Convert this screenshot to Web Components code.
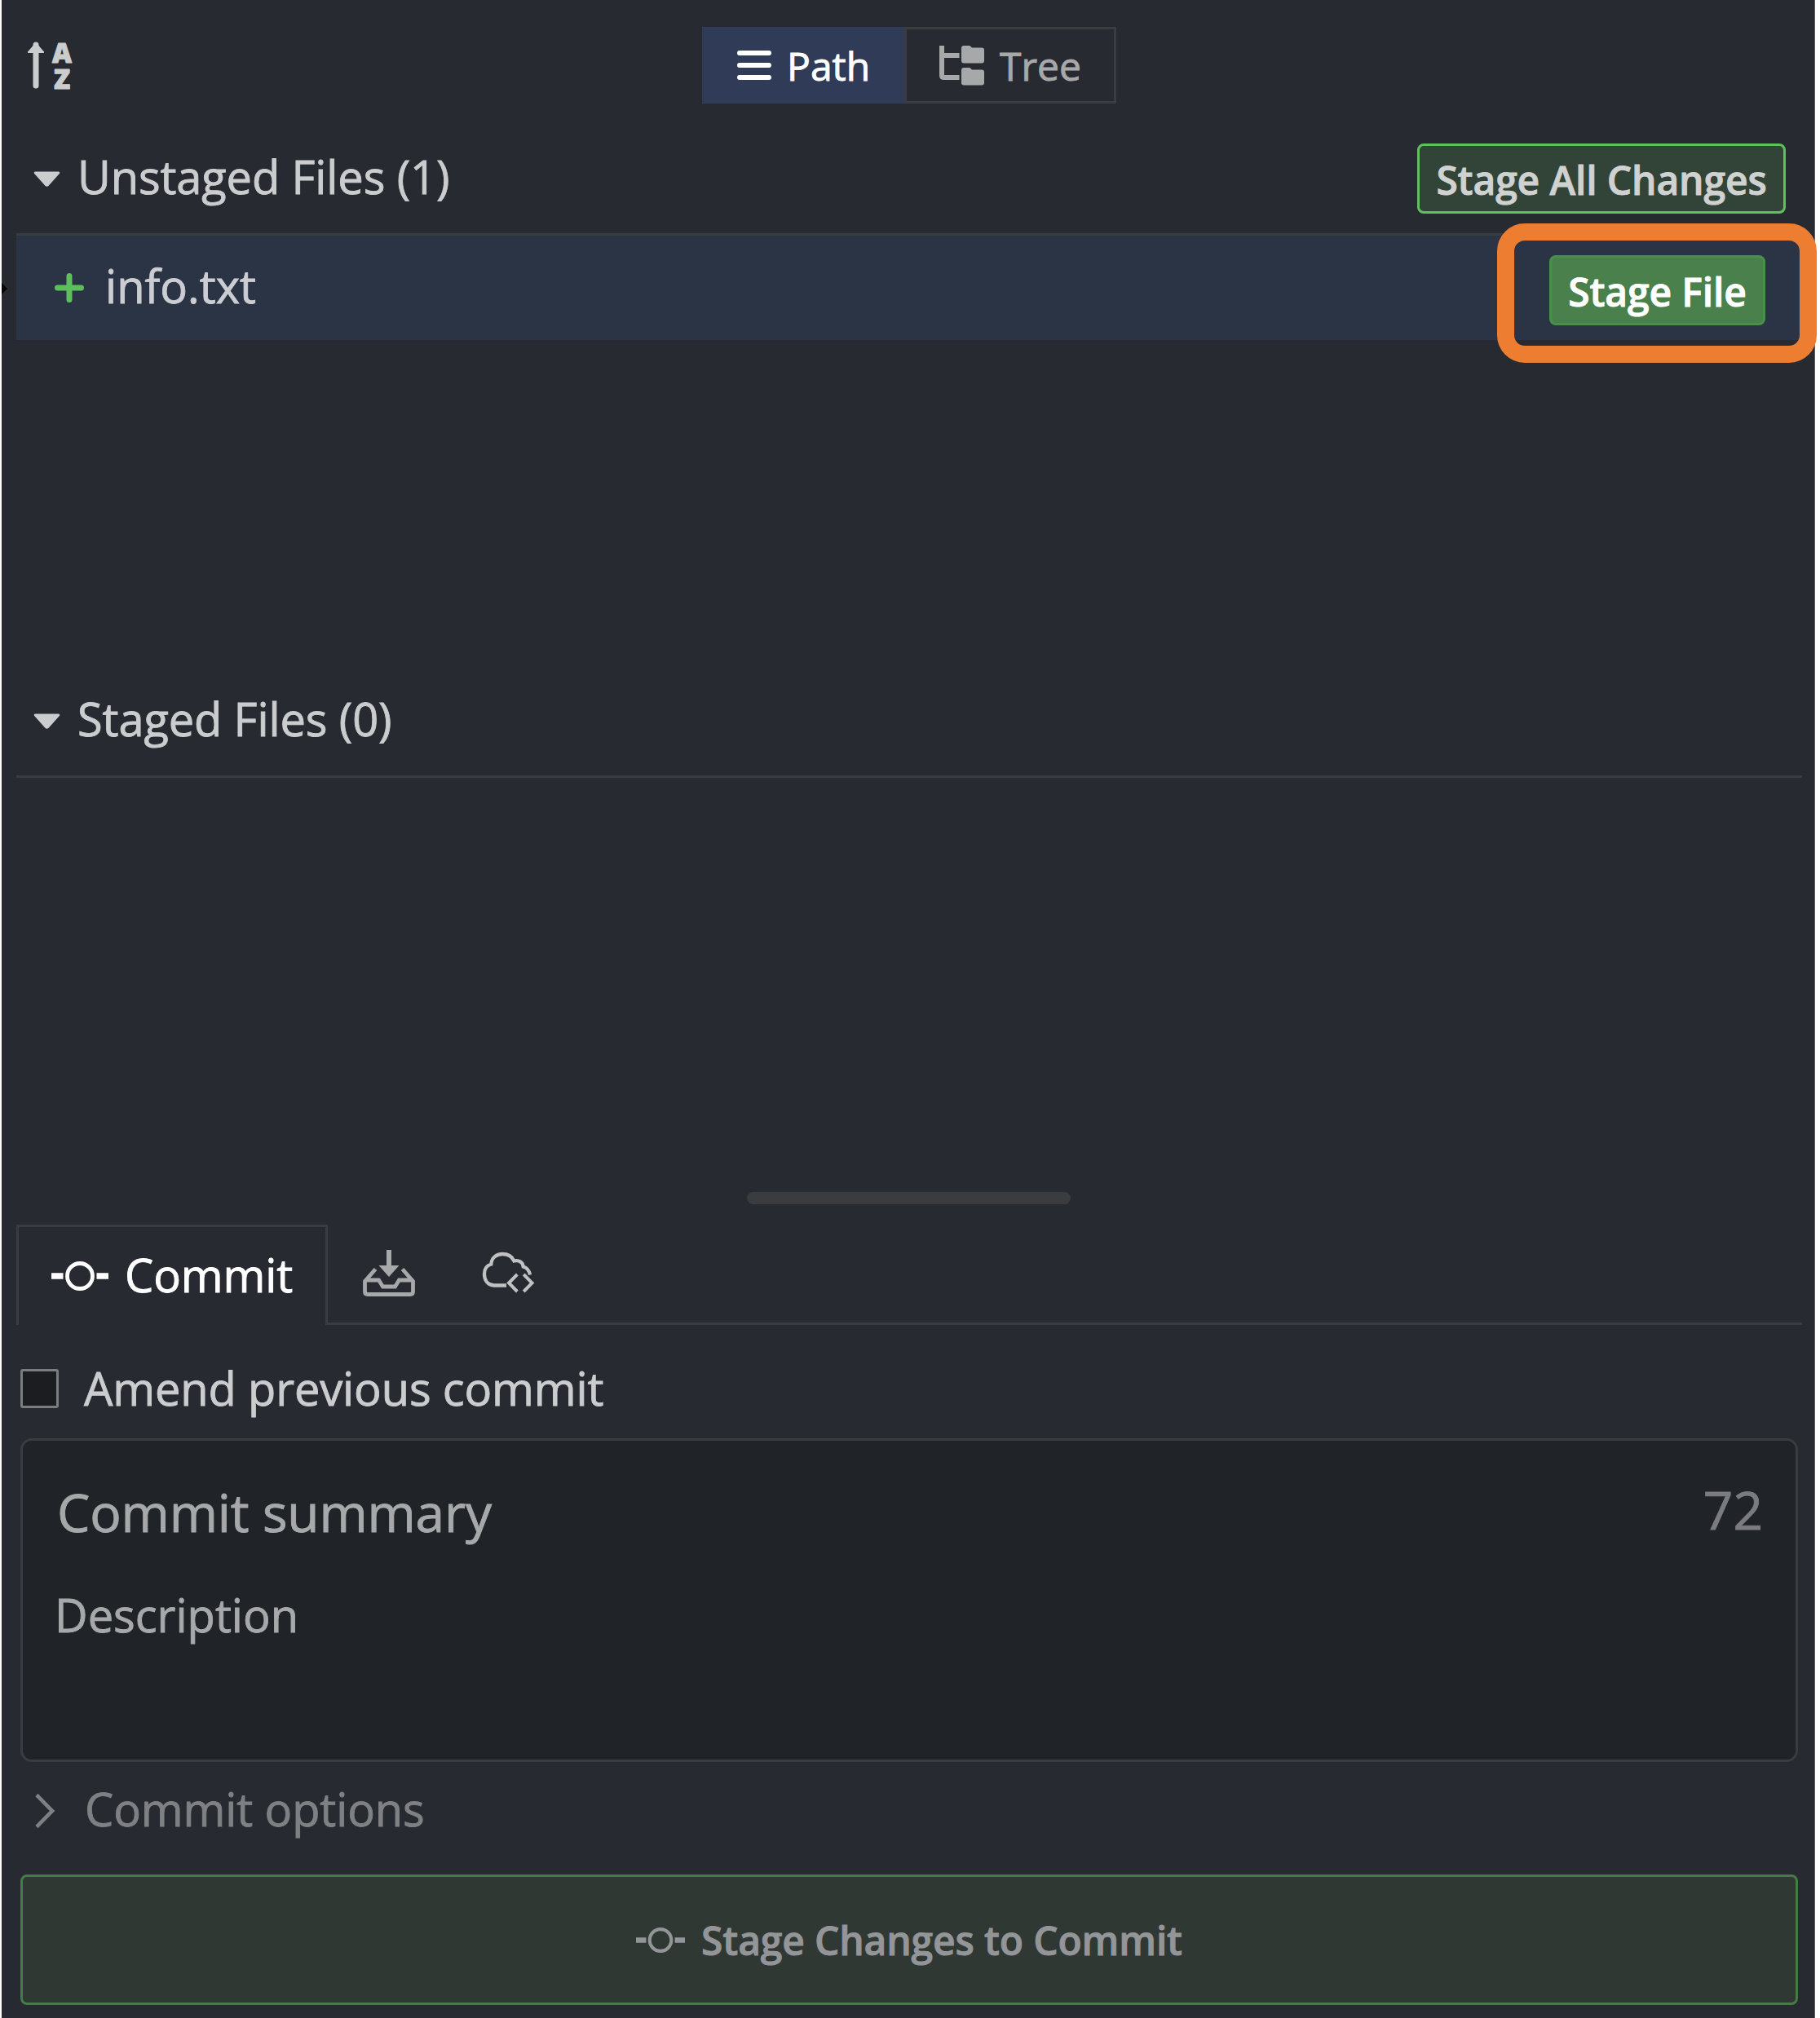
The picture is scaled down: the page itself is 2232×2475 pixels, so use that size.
<!DOCTYPE html>
<html lang="en">
<head>
<meta charset="utf-8">
<title>Commit panel</title>
<style>
html, body { margin: 0; padding: 0; background: #fff; }
body { font-family: "Open Sans", "Noto Sans", sans-serif; overflow: hidden; -webkit-text-stroke: 0.9px currentColor; }
</style>
</head>
<body>
<commit-panel></commit-panel>
<script>
const define = (name, html) => {
  const template = document.createElement('template');
  template.innerHTML = html;
  customElements.define(name, class extends HTMLElement {
    constructor() {
      super();
      this.attachShadow({ mode: 'open' }).appendChild(template.content.cloneNode(true));
    }
  });
};

const ICONS = {
  sort: ['0 0 56 57', `<path d="M10 3V53" stroke="currentColor" stroke-width="7" stroke-linecap="round"/><path d="M10 0 20 11.500q.5 1.500-1 1.500H1q-1.500 0-1-1.500z" fill="currentColor"/><text text-anchor="middle" font-family="Open Sans" font-weight="800" font-size="33" fill="currentColor" stroke="currentColor" stroke-width="1" stroke-linejoin="round"><tspan x="42" y="24.500">A</tspan><tspan x="42" y="56.500">Z</tspan></text>`],
  lines: ['0 0 43 36', `<path d="M3 3H40M3 18H40M3 33H40" stroke="currentColor" stroke-width="6" stroke-linecap="round"/>`],
  tree: ['0 0 55 49', `<path d="M3 0V36.500Q3 39 5.500 39H24.500M3 12H24.500" fill="none" stroke="currentColor" stroke-width="6"/><path d="M30 0h6.500q1 0 2 1l1.500 1.500H52q3 0 3 3V18.500q0 3-3 3H30q-3 0-3-3V3q0-3 3-3zM30 27h6.500q1 0 2 1l1.500 1.500H52q3 0 3 3V45.500q0 3-3 3H30q-3 0-3-3V30q0-3 3-3z" fill="currentColor"/>`],
  caret: ['0 0 34 20', `<path d="M2 .5H32Q34 1 33 3L19 19Q17 20.500 15 19L1 3Q0 1 2 .5z" fill="currentColor"/>`],
  plus: ['0 0 36 36', `<path d="M18 3.500V32.500M3.500 18H32.500" stroke="currentColor" stroke-width="7" stroke-linecap="round"/>`],
  node: ['0 0 70 36', `<circle cx="35" cy="18" r="15.500" fill="none" stroke="currentColor" stroke-width="4.800"/><path d="M0 18H14.500M55.500 18H70" stroke="currentColor" stroke-width="7.500"/>`],
  stash: ['0 0 64 57', `<path d="M32 0V22" stroke="currentColor" stroke-width="6"/><path d="M19.500 19H44.500L32 33z" fill="currentColor"/><path d="M15.500 23.500 2.500 38.500V51Q2.500 54.500 6 54.500H58Q61.500 54.500 61.500 51V38.500L48.500 23.500M2.500 37H19.500L24.500 45H39.500L44.500 37H61.500" fill="none" stroke="currentColor" stroke-width="4.800"/>`],
  cloud: ['0 0 64 49', `<path d="M29.500 40.500H14C6 40 2 34 2 26.500 2 20 5 16 10.500 14.500 11 6 17.500 2 24.500 2 32 2 37 6 39 10.500 45 9 50 12 50.500 17.500 56 19 58 23 59 27.500" fill="none" stroke="currentColor" stroke-width="4.300"/><path d="M43 27 32.500 37.500 43 48M51 27 61.500 37.500 51 48" fill="none" stroke="currentColor" stroke-width="4"/>`],
  chevron: ['0 0 25 42', `<path d="M2 1.500 22 21 2 40.500" fill="none" stroke="currentColor" stroke-width="4.600"/>`]
};

customElements.define('ui-icon', class extends HTMLElement {
  connectedCallback() {
    const [box, body] = ICONS[this.getAttribute('name')];
    this.attachShadow({ mode: 'open' }).innerHTML =
      `<style>:host{display:block;flex:none}svg{display:block;width:100%;height:100%;overflow:visible}</style><svg viewBox="${box}" preserveAspectRatio="none">${body}</svg>`;
  }
});

define('view-toggle', `<style>
:host { display: grid; grid-template-columns: 248px 260px; height: 94px; font-size: 48px; line-height: 80px; }
div { display: flex; align-items: center; box-sizing: border-box; height: 94px; }
.on { background: #2f3b57; color: #fff; padding-left: 43px; }
.off { border: 3px solid #3b3c3f; color: #a7a8aa; padding-left: 40px; }
.on ui-icon { width: 42px; height: 36px; margin-right: 19px; }
.off ui-icon { width: 55px; height: 49px; margin-right: 19px; }
span { padding-top: 2px; }
</style><div class="on"><ui-icon name="lines"></ui-icon><span>Path</span></div><div class="off"><ui-icon name="tree"></ui-icon><span>Tree</span></div>`);

define('panel-toolbar', `<style>
:host { display: grid; grid-template-columns: 1fr 508px 1fr; align-items: center; height: 160px; padding: 0 14px; }
ui-icon { width: 56px; height: 57px; color: #cbccce; }
</style><ui-icon name="sort"></ui-icon><view-toggle></view-toggle>`);

define('action-button', `<style>
:host { display: flex; box-sizing: border-box; align-items: center; justify-content: center; height: 86px; border: 3px solid #5fc15d; border-radius: 8px; background: #324437; color: #cfd2d0; font-size: 48px; font-weight: 600; line-height: 80px; letter-spacing: -0.15px; white-space: nowrap; }
:host([solid]) { background: #4a804b; border-color: #4a8f4b; color: #fff; }
span { padding-top: 4px; }
</style><span><slot></slot></span>`);

define('file-section', `<style>
:host { display: flex; flex-direction: column; }
header { display: flex; align-items: center; height: 126px; box-sizing: border-box; padding: 0 20px 14px 21px; color: #cbccce; font-size: 56px; line-height: 80px; }
ui-icon { width: 33px; height: 19px; margin: 7px 21px 0 0; }
h2 { margin: 0; font: inherit; flex: 1; white-space: nowrap; letter-spacing: -0.12px; }
.list { flex: 1; border-top: 3px solid #3b3c3f; }
</style><header><ui-icon name="caret"></ui-icon><h2><slot name="title"></slot></h2><slot name="action"></slot></header><div class="list"><slot></slot></div>`);

define('file-row', `<style>
:host { display: flex; align-items: center; height: 128px; background: #2b3445; color: #cbcdd2; font-size: 56px; line-height: 80px; padding: 0 45px 0 47px; }
ui-icon { width: 36px; height: 36px; color: #5dbf5b; margin-right: 26px; }
span { flex: 1; margin-top: -7px; }
</style><ui-icon name="plus"></ui-icon><span><slot></slot></span><slot name="action"></slot>`);

define('drag-handle', `<style>
:host { display: flex; justify-content: center; align-items: center; height: 64px; box-sizing: border-box; padding: 0 2px 1px 0; }
div { width: 397px; height: 15px; border-radius: 8px; background: #3b3c3f; }
</style><div></div>`);

define('commit-tabs', `<style>
:host { display: flex; height: 123px; }
.tab { display: flex; align-items: center; box-sizing: border-box; width: 382px; border: 3px solid #3b3c3f; border-bottom: 0; padding: 0 0 0 40px; color: #fff; font-size: 56px; line-height: 80px; }
.tab ui-icon { width: 70px; height: 36px; margin: -1px 20px 0 0; }
.tab span { margin-top: -5px; letter-spacing: -0.12px; }
.rest { flex: 1; display: flex; align-items: flex-start; border-bottom: 3px solid #3b3c3f; padding-left: 43px; }
.stash { width: 64px; height: 57px; color: #a7a8aa; margin-top: 31px; }
.cloud { width: 63px; height: 49px; color: #c0c1c3; margin: 34px 0 0 83px; }
</style><div class="tab"><ui-icon name="node"></ui-icon><span>Commit</span></div><div class="rest"><ui-icon class="stash" name="stash"></ui-icon><ui-icon class="cloud" name="cloud"></ui-icon></div>`);

define('check-field', `<style>
:host { display: flex; align-items: center; height: 139px; box-sizing: border-box; padding: 16px 0 0 5px; color: #cbccce; font-size: 56px; line-height: 80px; letter-spacing: -0.13px; }
i { box-sizing: border-box; width: 47px; height: 48px; border: 3px solid #7b7c7f; border-radius: 3px; background: #1c1d21; margin-right: 31px; }
span { margin-top: -2px; }
</style><i></i><span><slot></slot></span>`);

define('message-box', `<style>
:host { display: flex; flex-direction: column; box-sizing: border-box; height: 397px; margin: 0 5px; border: 3px solid #3b3c3f; border-radius: 14px; background: #202327; color: #a7a8aa; padding: 40px 40px 0 42px; }
.summary { display: flex; justify-content: space-between; font-size: 64px; line-height: 96px; letter-spacing: -0.14px; }
.count { color: #7b7c7f; margin-top: -3px; letter-spacing: 0; }
.description { font-size: 56px; line-height: 80px; margin: 37px 0 0 -3px; }
</style><div class="summary"><span>Commit summary</span><span class="count">72</span></div><div class="description">Description</div>`);

define('option-toggle', `<style>
:host { display: flex; align-items: center; height: 138px; box-sizing: border-box; padding: 0 0 22px 23px; color: #7f8083; font-size: 56px; line-height: 80px; }
ui-icon { width: 24px; height: 42px; margin: 4px 37px 0 0; }
span { margin-top: -2px; letter-spacing: -0.1px; }
</style><ui-icon name="chevron"></ui-icon><span><slot></slot></span>`);

define('submit-button', `<style>
:host { display: flex; align-items: center; justify-content: center; box-sizing: border-box; height: 160px; margin: 0 5px; border: 3px solid #457b46; border-radius: 8px; background: #303834; color: #949599; font-size: 48px; font-weight: 600; line-height: 80px; letter-spacing: -0.17px; }
ui-icon { width: 60px; height: 31px; margin: 1px 20px 0 0; }
span { padding-top: 1px; }
</style><ui-icon name="node"></ui-icon><span><slot></slot></span>`);

define('commit-panel', `<style>
:host { display: block; position: relative; box-sizing: border-box; width: 2232px; height: 2475px; padding-left: 2px; background: #fff; }
main { display: flex; flex-direction: column; box-sizing: border-box; width: 2224px; height: 2475px; background: #272a31; border-right: 1px solid #5b6163; padding: 0 15px 0 18px; }
.unstaged { height: 665px; }
.staged { height: 613px; }
.all { width: 452px; margin: 5px 0 0; }
.one { width: 265px; margin-top: 5px; }
.ring { position: absolute; box-sizing: border-box; left: 1836px; top: 274px; width: 392px; height: 171px; border: 21px solid #ec7d31; border-radius: 34px; }
.edge { position: absolute; left: 2px; top: 347px; width: 7px; height: 14px; background: #050506; clip-path: polygon(0 0, 100% 50%, 0 100%); }
</style>
<main>
<panel-toolbar></panel-toolbar>
<file-section class="unstaged"><span slot="title">Unstaged Files (1)</span><action-button class="all" slot="action">Stage All Changes</action-button>
<file-row>info.txt<action-button class="one" slot="action" solid>Stage File</action-button></file-row></file-section>
<file-section class="staged"><span slot="title">Staged Files (0)</span></file-section>
<drag-handle></drag-handle>
<commit-tabs></commit-tabs>
<check-field>Amend previous commit</check-field>
<message-box></message-box>
<option-toggle>Commit options</option-toggle>
<submit-button>Stage Changes to Commit</submit-button>
</main>
<div class="edge"></div>
<div class="ring"></div>`);
</script>
</body>
</html>
